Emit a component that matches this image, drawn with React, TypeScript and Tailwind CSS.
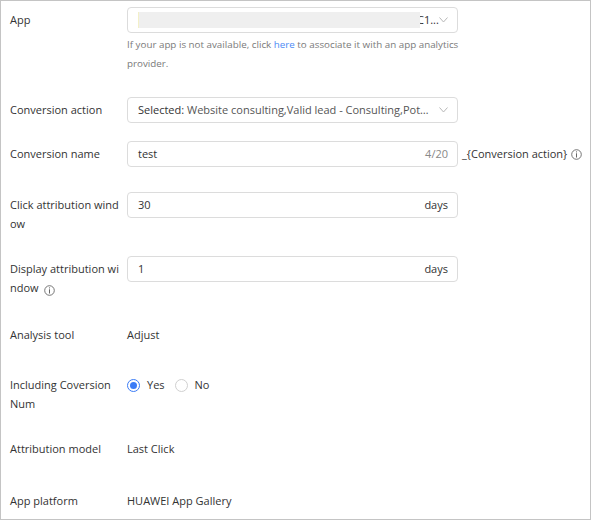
import React from "react";

const font = { fontFamily: '"Open Sans", "Noto Sans", sans-serif' };

function Chevron() {
  return (
    <svg width="9" height="6" viewBox="0 0 9 6" className="shrink-0">
      <polyline points="0.5,0.5 4.5,5 8.5,0.5" fill="none" stroke="#b8b8b8" strokeWidth="1" />
    </svg>
  );
}

function InfoIcon() {
  return (
    <svg width="11" height="11" viewBox="0 0 11 11" className="inline-block shrink-0">
      <circle cx="5.5" cy="5.5" r="4.8" fill="none" stroke="#666" strokeWidth="0.9" />
      <rect x="5" y="2.4" width="1" height="1" fill="#666" />
      <rect x="5" y="4.3" width="1" height="4.2" fill="#666" />
    </svg>
  );
}

function Label({ children, breakAll }: { children: React.ReactNode; breakAll?: boolean }) {
  return (
    <div
      className={`w-[113px] shrink-0 pt-[3px] leading-[19px] text-[11px] text-[#333] ${
        breakAll ? "break-all" : ""
      }`}
    >
      {children}
    </div>
  );
}

function Box({ children }: { children: React.ReactNode }) {
  return (
    <div className="flex h-[26px] w-[331px] items-center rounded-[4px] border border-[#dcdcdc] bg-white pl-[10px] pr-[9px] text-[11px] text-[#333]">
      {children}
    </div>
  );
}

function Radio({ checked, label }: { checked?: boolean; label: string }) {
  return (
    <div className="flex items-center gap-[7px]">
      <span
        className={`flex h-[13px] w-[13px] items-center justify-center rounded-full border ${
          checked ? "border-[#3b7cf6]" : "border-[#d0d0d0]"
        }`}
      >
        {checked && <span className="h-[7px] w-[7px] rounded-full bg-[#3b7cf6]" />}
      </span>
      <span>{label}</span>
    </div>
  );
}

export default function App() {
  return (
    <div
      className="flex h-[520px] w-[591px] flex-col border border-[#c4c4c4] bg-white pl-[9px] pt-[6px]"
      style={font}
    >
      {/* App */}
      <div className="flex items-start gap-[4px]">
        <Label>App</Label>
        <div className="flex flex-col">
          <Box>
            <div className="flex flex-1 items-center overflow-hidden">
              <div className="relative z-10 h-[16px] w-[282px] shrink-0 bg-[#efefef]">
                <div className="h-full w-[1px] bg-[#f3f0c8]" />
              </div>
              <span className="-ml-[3px] text-[#333]">C1...</span>
            </div>
            <Chevron />
          </Box>
          <div className="mt-[2px] w-[345px] text-[9.8px] leading-[19px] text-[#7a7a7a]">
            If your app is not available, click <a className="text-[#4c8bf5]">here</a> to associate it with an
            app analytics provider.
          </div>
        </div>
      </div>

      {/* Conversion action */}
      <div className="mt-[24px] flex items-start gap-[4px]">
        <Label>Conversion action</Label>
        <Box>
          <span className="min-w-0 flex-1 truncate text-[#555]">
            <span className="text-[#333]">Selected: </span>
            Website consulting,Valid lead - Consulting,Potential customer
          </span>
          <span className="ml-[6px]">
            <Chevron />
          </span>
        </Box>
      </div>

      {/* Conversion name */}
      <div className="mt-[18px] flex items-start gap-[4px]">
        <Label>Conversion name</Label>
        <Box>
          <span className="flex-1">test</span>
          <span className="text-[#888]">4/20</span>
        </Box>
        <div className="flex h-[26px] items-center gap-[4px] text-[11px] text-[#333]">
          <span>_{"{Conversion action}"}</span>
          <InfoIcon />
        </div>
      </div>

      {/* Click attribution window */}
      <div className="mt-[25px] flex items-start gap-[4px]">
        <Label breakAll>Click attribution window</Label>
        <Box>
          <span className="flex-1">30</span>
          <span>days</span>
        </Box>
      </div>

      {/* Display attribution window */}
      <div className="mt-[23px] flex items-start gap-[4px]">
        <Label breakAll>
          Display attribution window{" "}
          <span className="ml-[3px] inline-block align-[-1px]">
            <InfoIcon />
          </span>
        </Label>
        <Box>
          <span className="flex-1">1</span>
          <span>days</span>
        </Box>
      </div>

      {/* Analysis tool */}
      <div className="mt-[24px] flex items-start gap-[4px]">
        <Label>Analysis tool</Label>
        <div className="pt-[3px] text-[11px] leading-[19px] text-[#333]">Adjust</div>
      </div>

      {/* Including Conversion Num */}
      <div className="mt-[28px] flex items-start gap-[4px]">
        <Label>Including Coversion Num</Label>
        <div className="flex h-[26px] items-center gap-[10px] text-[11px] text-[#333]">
          <Radio checked label="Yes" />
          <Radio label="No" />
        </div>
      </div>

      {/* Attribution model */}
      <div className="mt-[23px] flex items-start gap-[4px]">
        <Label>Attribution model</Label>
        <div className="pt-[3px] text-[11px] leading-[19px] text-[#333]">Last Click</div>
      </div>

      {/* App platform */}
      <div className="mt-[30px] flex items-start gap-[4px]">
        <Label>App platform</Label>
        <div className="pt-[3px] text-[11px] leading-[19px] text-[#333]">HUAWEI App Gallery</div>
      </div>
    </div>
  );
}
